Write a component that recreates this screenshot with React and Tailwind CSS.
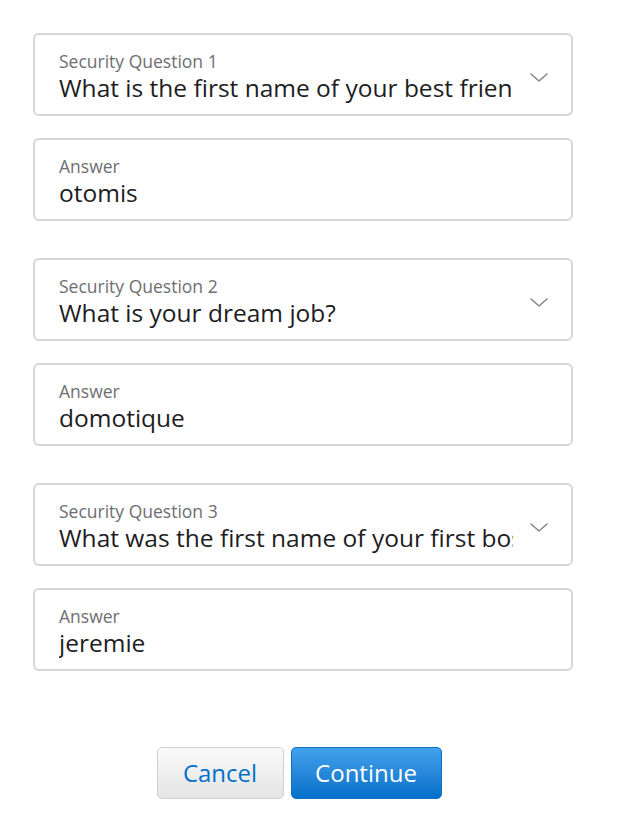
import React from "react";

function Chevron() {
  return (
    <svg width="20" height="12" viewBox="0 0 20 12" className="absolute right-[22px] top-[37px]">
      <path d="M2 2 L10 9 L18 2" fill="none" stroke="#86868b" strokeWidth="1.6" strokeLinecap="round" strokeLinejoin="round" />
    </svg>
  );
}

function Field({ label, value, select }) {
  return (
    <div className="relative h-[83px] w-[540px] rounded-[6px] border-2 border-[#d6d6d6] bg-white pl-[24px] pr-[58px] pt-[15px]">
      <div className="text-[17.5px] leading-[23px] text-[#6e6e73]">{label}</div>
      <div className="overflow-hidden whitespace-nowrap text-[24.5px] leading-[30px] text-[#1d1d1f]">{value}</div>
      {select && <Chevron />}
    </div>
  );
}

export default function App() {
  const groups = [
    ["Security Question 1", "What is the first name of your best friend in high school?", "otomis"],
    ["Security Question 2", "What is your dream job?", "domotique"],
    ["Security Question 3", "What was the first name of your first boss?", "jeremie"],
  ];
  return (
    <div className="min-h-[833px] w-[626px] bg-white pl-[33px] pt-[33px]" style={{ fontFamily: "'Open Sans', 'Liberation Sans', sans-serif" }}>
      <div className="flex flex-col gap-[37px]">
        {groups.map(([l, q, a]) => (
          <div key={l} className="flex flex-col gap-[22px]">
            <Field label={l} value={q} select />
            <Field label="Answer" value={a} />
          </div>
        ))}
      </div>
      <div className="mt-[76px] flex w-[532px] justify-center gap-[7px]">
        <button className="h-[52px] w-[127px] rounded-[5px] border border-[#cfcfcf] bg-gradient-to-b from-[#fafafa] to-[#e4e4e4] text-[24px] text-[#0070c9]">
          Cancel
        </button>
        <button className="h-[52px] w-[151px] rounded-[5px] border border-[#0b70c6] bg-gradient-to-b from-[#42a1ec] to-[#0070c9] text-[24px] text-white">
          Continue
        </button>
      </div>
    </div>
  );
}
